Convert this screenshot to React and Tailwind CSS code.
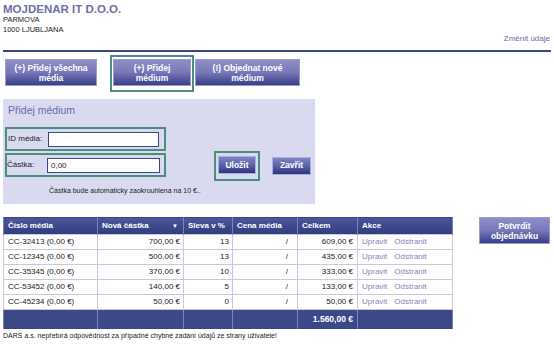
import React from "react";

const rows = [
  { id: "CC-32413 (0,00 €)", amount: "700,00 €", discount: 13, total: "609,00 €" },
  { id: "CC-12345 (0,00 €)", amount: "500,00 €", discount: 13, total: "435,00 €" },
  { id: "CC-35345 (0,00 €)", amount: "370,00 €", discount: 10, total: "333,00 €" },
  { id: "CC-53452 (0,00 €)", amount: "140,00 €", discount: 5, total: "133,00 €" },
  { id: "CC-45234 (0,00 €)", amount: "50,00 €", discount: 0, total: "50,00 €" },
];

const navBtn =
  "flex items-center justify-center text-center h-[27px] border border-[#9a9ad0] bg-gradient-to-b from-[#8e8ec8] via-[#7878b8] to-[#383f86] text-white text-[8.5px] font-bold leading-[10px]";

const smallBtn =
  "flex items-center justify-center h-[18px] border border-[#a9aedc] bg-gradient-to-b from-[#7d84c3] via-[#5c64a8] to-[#2b3580] text-white text-[8.5px] font-bold";

const th = "h-[17px] px-[4px] text-left font-bold text-white border-x border-[#7a82b8] align-middle";
const td = "h-[15px] px-[4px] border border-[#c7cadf] align-middle";

export default function App() {
  return (
    <div className="w-[554px] h-[350px] bg-white overflow-hidden font-['Liberation_Sans',Arial,sans-serif] text-[#222]">
      {/* company header */}
      <div className="px-[3px] pt-[3px]">
        <div className="text-[11.5px] leading-[12px] font-bold text-[#6e6ea9]">MOJDENAR IT D.O.O.</div>
        <div className="text-[7.5px] leading-[10px]">PARMOVA</div>
        <div className="text-[7.5px] leading-[10px]">1000 LJUBLJANA</div>
        <div className="text-right text-[8px] leading-[10px] text-[#6a6aa8] -mt-[1px] pr-[1px]">Změnit údaje</div>
        <div className="h-[2px] bg-[#3b4689] mt-[6px]" />
      </div>

      {/* tab buttons */}
      <div className="flex items-start pl-[5px] mt-[3px]">
        <button className={navBtn + " w-[92px] mt-[4px]"}>
          (+) Přidej všechna
          <br />
          média
        </button>
        <div className="ml-[13px] border-2 border-[#4e8c7c] px-[1px] pt-[2px] pb-[4px]">
          <button className={navBtn + " w-[78px]"}>
            (+) Přidej
            <br />
            médium
          </button>
        </div>
        <button className={navBtn + " w-[105px] mt-[4px] ml-[1px]"}>
          (!) Objednat nové
          <br />
          médium
        </button>
      </div>

      {/* add form */}
      <div className="ml-[3px] mt-[7px] w-[312px] h-[105px] bg-[#d9d9ef] pl-[2px] pt-[5px]">
        <div className="pl-[3px] text-[10.5px] leading-[12px] text-[#6b6ba9]">Přidej médium</div>
        <div className="flex items-start mt-[11px]">
          <div className="flex flex-col gap-[2px]">
            <div className="w-[161px] h-[24px] border-2 border-[#4e8c7c] flex items-center pl-[1px]">
              <span className="text-[8px] w-[40px]">ID média:</span>
              <div className="w-[111px] h-[15px] border border-[#3b4690] bg-white" />
            </div>
            <div className="w-[161px] h-[24px] border-2 border-[#4e8c7c] flex items-center">
              <span className="text-[8px] w-[40px]">Částka:</span>
              <div className="w-[113px] h-[15px] border border-[#3b4690] bg-white text-[8px] leading-[13px] pl-[3px]">0,00</div>
            </div>
          </div>
          <div className="flex items-center ml-[48px] mt-[24px]">
            <div className="border-2 border-[#4e8c7c] px-[2px] pt-[3px] pb-[5px]">
              <button className={smallBtn + " w-[38px]"}>Uložit</button>
            </div>
            <button className={smallBtn + " w-[39px] ml-[12px] -mt-[1px]"}>Zavřit</button>
          </div>
        </div>
        <div className="pl-[44px] mt-[5px] text-[7px] leading-[9px]">Částka bude automaticky zaokrouhlena na 10 €..</div>
      </div>

      {/* table + confirm */}
      <div className="flex items-start ml-[3px] mt-[13px]">
        <table className="w-[449px] border-collapse border border-[#3b4789] text-[8px] leading-[10px] table-fixed">
          <colgroup>
            <col className="w-[94px]" />
            <col className="w-[86px]" />
            <col className="w-[49px]" />
            <col className="w-[65px]" />
            <col className="w-[60px]" />
            <col className="w-[95px]" />
          </colgroup>
          <thead>
            <tr className="bg-gradient-to-b from-[#4b569a] to-[#303c7e]">
              <th className={th}>Číslo média</th>
              <th className={th}>
                <div className="flex justify-between items-center">
                  <span>Nová částka</span>
                  <span className="text-[6px] mr-[1px]">▼</span>
                </div>
              </th>
              <th className={th}>Sleva v %</th>
              <th className={th}>Cena média</th>
              <th className={th}>Celkem</th>
              <th className={th}>Akce</th>
            </tr>
          </thead>
          <tbody>
            {rows.map((r) => (
              <tr key={r.id} className="bg-white">
                <td className={td}>{r.id}</td>
                <td className={td + " text-right pr-[3px]"}>{r.amount}</td>
                <td className={td + " text-right pr-[3px]"}>{r.discount}</td>
                <td className={td + " text-right pr-[9px]"}>/</td>
                <td className={td + " text-right pr-[4px]"}>{r.total}</td>
                <td className={td + " text-[#8686b6]"}>
                  <span>Upravit</span>
                  <span className="ml-[7px]">Odstranit</span>
                </td>
              </tr>
            ))}
            <tr className="bg-[#3d4889]">
              <td className="h-[19px] border-x border-[#7a82b8]" />
              <td className="border-x border-[#7a82b8]" />
              <td className="border-x border-[#7a82b8]" />
              <td className="border-x border-[#7a82b8]" />
              <td className="border-x border-[#7a82b8] text-right pr-[4px] text-white font-bold text-[8.5px]">1.560,00 €</td>
              <td className="border-x border-[#7a82b8]" />
            </tr>
          </tbody>
        </table>
        <button className={navBtn + " w-[71px] ml-[26px]"}>
          Potvrdit
          <br />
          objednávku
        </button>
      </div>

      <div className="pl-[3px] mt-[2px] text-[7px] leading-[9px]">
        DARS a.s. nepřebírá odpovědnost za případné chybné zadání údajů ze strany uživatele!
      </div>
    </div>
  );
}
